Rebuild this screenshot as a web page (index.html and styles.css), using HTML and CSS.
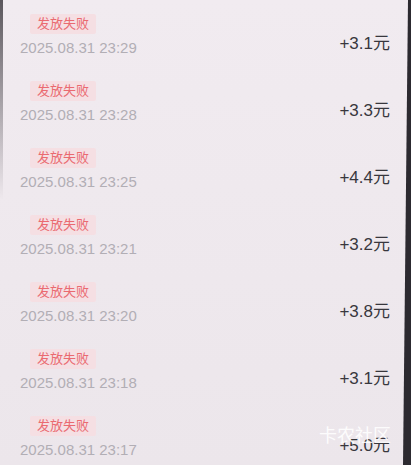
FILE: index.html
```html
<!DOCTYPE html>
<html lang="zh">
<head>
<meta charset="utf-8">
<link rel="stylesheet" href="styles.css">
</head>
<body>
<div class="screen">
  <ul class="list">
    <li class="row"><div class="info"><span class="badge">发放失败</span><span class="date">2025.08.31 23:29</span></div><span class="amount">+3.1元</span></li>
    <li class="row"><div class="info"><span class="badge">发放失败</span><span class="date">2025.08.31 23:28</span></div><span class="amount">+3.3元</span></li>
    <li class="row"><div class="info"><span class="badge">发放失败</span><span class="date">2025.08.31 23:25</span></div><span class="amount">+4.4元</span></li>
    <li class="row"><div class="info"><span class="badge">发放失败</span><span class="date">2025.08.31 23:21</span></div><span class="amount">+3.2元</span></li>
    <li class="row"><div class="info"><span class="badge">发放失败</span><span class="date">2025.08.31 23:20</span></div><span class="amount">+3.8元</span></li>
    <li class="row"><div class="info"><span class="badge">发放失败</span><span class="date">2025.08.31 23:18</span></div><span class="amount">+3.1元</span></li>
    <li class="row"><div class="info"><span class="badge">发放失败</span><span class="date">2025.08.31 23:17</span></div><span class="amount">+5.0元</span></li>
  </ul>
  <div class="bezel-left"></div>
  <div class="bezel-right"></div>
  <div class="watermark">卡农社区</div>
</div>
</body>
</html>
```
FILE: styles.css
```css
html, body {
  margin: 0;
  padding: 0;
}
body {
  width: 411px;
  height: 465px;
  overflow: hidden;
  background: #efe9ee;
  font-family: "Liberation Sans", "Noto Sans CJK SC", sans-serif;
}
.screen {
  position: relative;
  width: 411px;
  height: 465px;
  overflow: hidden;
  background: linear-gradient(180deg, #f1ebf0 0%, #eee8ed 60%, #ece6eb 100%);
}
.list {
  list-style: none;
  margin: 0;
  padding: 14px 21px 0 20px;
}
.row {
  height: 67px;
  display: flex;
  justify-content: space-between;
  align-items: flex-start;
}
.info {
  display: flex;
  flex-direction: column;
  align-items: flex-start;
}
.badge {
  margin-left: 10px;
  height: 20px;
  line-height: 20px;
  padding: 0 7px;
  background: #f5dfe3;
  color: #ea6a70;
  font-size: 13px;
  border-radius: 2px;
}
.date {
  margin-top: 5px;
  height: 18px;
  line-height: 18px;
  color: #b2aeb5;
  font-size: 15px;
}
.amount {
  margin-top: 20px;
  line-height: 20px;
  color: #38373d;
  font-size: 17px;
}
.bezel-left {
  position: absolute;
  left: 0;
  top: 0;
  width: 3px;
  height: 200px;
  background: linear-gradient(180deg, #5a565c, rgba(90, 86, 92, 0));
}
.bezel-right {
  position: absolute;
  right: 0;
  top: 0;
  width: 9px;
  height: 465px;
  background: #2c2a30;
  clip-path: polygon(6px 0, 9px 0, 9px 100%, 1px 100%);
}
.watermark {
  position: absolute;
  left: 319px;
  top: 421px;
  font-size: 18px;
  color: rgba(255, 255, 255, 0.9);
  font-family: "Noto Sans CJK SC", sans-serif;
  letter-spacing: 0px;
}
```
